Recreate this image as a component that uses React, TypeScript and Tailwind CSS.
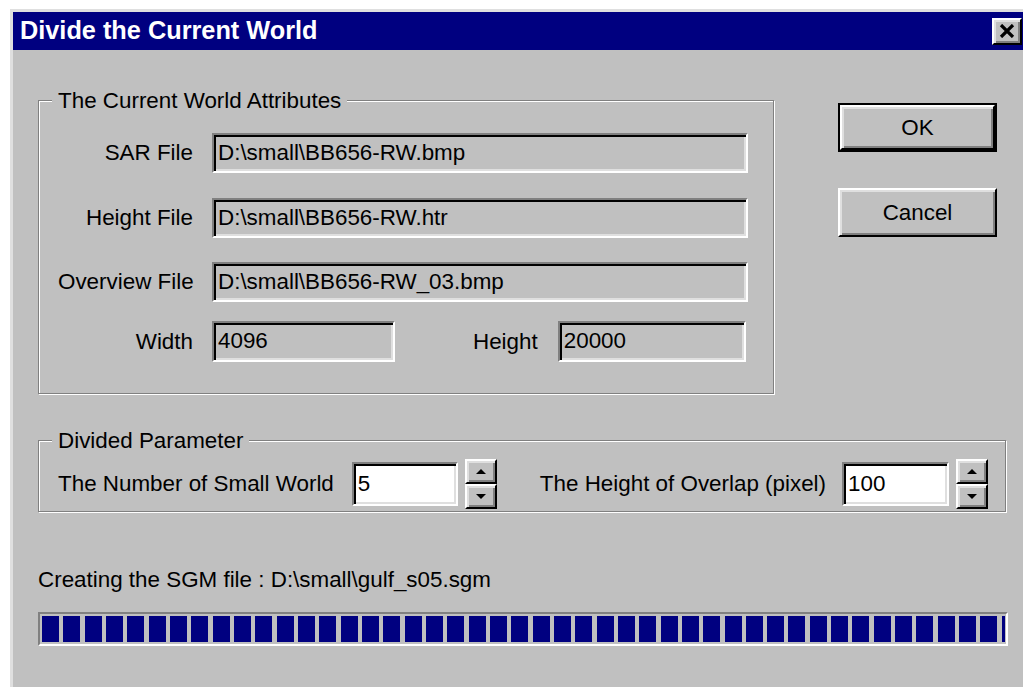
const sunken =
  "border-2 border-t-[#808080] border-l-[#808080] border-r-white border-b-white shadow-[inset_2px_2px_0_#000,inset_-2px_-2px_0_#dfdfdf]";
const raised =
  "border-2 border-t-white border-l-white border-r-black border-b-black shadow-[inset_2px_2px_0_#dfdfdf,inset_-2px_-2px_0_#808080]";
const etched = "border border-[#808080] shadow-[inset_1px_1px_0_#fff,1px_1px_0_#fff]";

function GroupBox({ title, className, children }: { title: string; className: string; children: React.ReactNode }) {
  return (
    <div className={`relative ${etched} ${className}`}>
      <span className="absolute left-[13px] top-0 -translate-y-1/2 bg-[#c0c0c0] px-[6px] leading-[26px]">{title}</span>
      {children}
    </div>
  );
}

function ReadOnlyField({ value, width }: { value: string; width: string }) {
  return (
    <div className={`${sunken} ${width} h-full flex items-center pl-[4px] bg-[#c0c0c0]`}>
      <span className="leading-none">{value}</span>
    </div>
  );
}

function FileRow({ label, value, className }: { label: string; value: string; className?: string }) {
  return (
    <div className={`flex items-center h-[40px] ${className || ""}`}>
      <div className="w-[135px] text-right whitespace-nowrap">{label}</div>
      <div className="ml-[19px] h-full">
        <ReadOnlyField value={value} width="w-[536px]" />
      </div>
    </div>
  );
}

function Arrow({ down }: { down?: boolean }) {
  return (
    <svg width="10" height="6" viewBox="0 0 10 6">
      <polygon points={down ? "0,0 10,0 5,5" : "5,0 10,5 0,5"} fill="#000" />
    </svg>
  );
}

function SpinEdit({ value, fieldWidth }: { value: string; fieldWidth: string }) {
  return (
    <div className="flex items-center">
      <div className={`${sunken} ${fieldWidth} h-[44px] bg-white flex items-center pl-[4px]`}>
        <span className="leading-none">{value}</span>
      </div>
      <div className="ml-[7px] flex flex-col w-[32px] h-[50px]">
        <button className={`${raised} bg-[#c0c0c0] h-[25px] flex items-center justify-center`}>
          <Arrow />
        </button>
        <button className={`${raised} bg-[#c0c0c0] h-[25px] flex items-center justify-center`}>
          <Arrow down />
        </button>
      </div>
    </div>
  );
}

export default function App() {
  const blocks = Array.from({ length: 45 });

  return (
    <div className="w-[1023px] h-[687px] overflow-hidden bg-white pt-[9px] pl-[10px] font-['Liberation_Sans',Arial,sans-serif] text-[22.4px] text-black">
      <div className="h-full border-t-[3px] border-l-[3px] border-[#dfdfdf] bg-[#c0c0c0] flex flex-col">
        {/* title bar */}
        <div className="h-[38px] bg-[#000080] flex items-center justify-between shrink-0">
          <span className="pl-[7px] text-[25.3px] font-bold text-white leading-none">Divide the Current World</span>
          <button className={`${raised} bg-[#c0c0c0] w-[30px] h-[27px] mr-[1px] flex items-center justify-center`}>
            <svg width="16" height="14" viewBox="0 0 16 14">
              <path d="M2 1 L14 13 M14 1 L2 13" stroke="#000" strokeWidth="3.2" />
            </svg>
          </button>
        </div>

        <div className="pl-[25px] pt-[50px]">
          <div className="flex">
            <GroupBox title="The Current World Attributes" className="w-[736px] h-[294px] pt-[32px] pl-[19px]">
              <FileRow label="SAR File" value="D:\small\BB656-RW.bmp" />
              <FileRow label="Height File" value="D:\small\BB656-RW.htr" className="mt-[25px]" />
              <FileRow label="Overview File" value="D:\small\BB656-RW_03.bmp" className="mt-[24px]" />
              <div className="flex items-center h-[41px] mt-[19px]">
                <div className="w-[135px] text-right">Width</div>
                <div className="ml-[19px] h-full">
                  <ReadOnlyField value="4096" width="w-[183px]" />
                </div>
                <div className="ml-[78px]">Height</div>
                <div className="ml-[20px] h-full">
                  <ReadOnlyField value="20000" width="w-[188px]" />
                </div>
              </div>
            </GroupBox>

            <div className="ml-[64px] mt-[3px] flex flex-col">
              <div className="border-2 border-black">
                <button className={`${raised} bg-[#c0c0c0] w-[155px] h-[45px] flex items-center justify-center`}>OK</button>
              </div>
              <button className={`${raised} bg-[#c0c0c0] w-[159px] h-[49px] mt-[36px] flex items-center justify-center`}>
                Cancel
              </button>
            </div>
          </div>

          <GroupBox title="Divided Parameter" className="mt-[46px] w-[968px] h-[72px] pt-[18px] pl-[19px]">
            <div className="flex items-center h-[50px]">
              <span className="whitespace-nowrap">The Number of Small World</span>
              <div className="ml-[18px]">
                <SpinEdit value="5" fieldWidth="w-[106px]" />
              </div>
              <span className="ml-[43px] whitespace-nowrap">The Height of Overlap (pixel)</span>
              <div className="ml-[16px]">
                <SpinEdit value="100" fieldWidth="w-[107px]" />
              </div>
            </div>
          </GroupBox>

          <div className="mt-[55px] leading-[26px]">Creating the SGM file : D:\small\gulf_s05.sgm</div>

          <div className="mt-[19px] w-[970px] h-[34px] border-2 border-t-[#808080] border-l-[#808080] border-r-white border-b-white p-[2px] flex gap-[4.33px] overflow-hidden">
            {blocks.map((_, i) => (
              <div key={i} className="w-[17px] shrink-0 bg-[#000080]" />
            ))}
            <div className="w-[3px] shrink-0 bg-[#000080]" />
          </div>
        </div>
      </div>
    </div>
  );
}
